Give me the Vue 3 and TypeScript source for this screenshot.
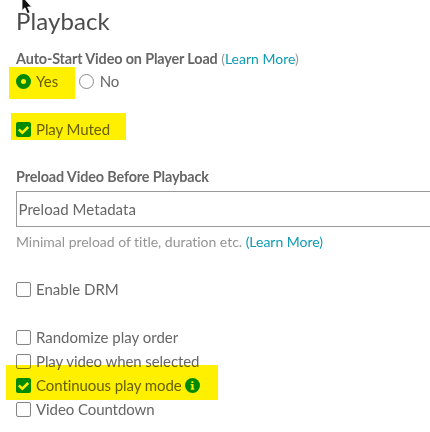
<script setup lang="ts">
import { ref } from 'vue'

interface Option {
  label: string
  checked: boolean
  mark?: string
  info?: boolean
  tight?: boolean
}

const autoStart = ref<'yes' | 'no'>('yes')
const muted = ref<Option[]>([{ label: 'Play Muted', checked: true, mark: 'mark-muted', tight: true }])
const drm = ref<Option[]>([{ label: 'Enable DRM', checked: false }])
const playlist = ref<Option[]>([
  { label: 'Randomize play order', checked: false },
  { label: 'Play video when selected', checked: false, tight: true },
  { label: 'Continuous play mode', checked: true, mark: 'mark-continuous', info: true, tight: true },
  { label: 'Video Countdown', checked: false, tight: true },
])
const groups = [
  { name: 'muted', items: muted },
  { name: 'drm', items: drm },
  { name: 'playlist', items: playlist },
]
</script>

<template>
  <main class="panel">
    <svg class="cursor" viewBox="0 0 12 16" width="12" height="16">
      <path d="M1-4V10.6L4 7.8L6.4 13.6L9 12.5L6.6 7H10.6Z" fill="#111" stroke="#fff" stroke-width=".8" />
    </svg>
    <h1 class="title">Playback</h1>

    <div class="field-label"><b>Auto-Start Video on Player Load</b> <span class="paren">(<a class="link">Learn More</a>)</span></div>
    <div class="row radios">
      <span class="row choice" @click="autoStart = 'yes'">
        <i class="radio" :class="{ on: autoStart === 'yes' }"></i><span class="text">Yes</span>
      </span>
      <span class="row choice" @click="autoStart = 'no'">
        <i class="radio" :class="{ on: autoStart === 'no' }"></i><span class="text">No</span>
      </span>
      <span class="mark mark-yes"></span>
    </div>

    <template v-for="group in groups" :key="group.name">
      <div :class="['group', group.name]">
        <div v-for="item in group.items.value" :key="item.label" class="row" @click="item.checked = !item.checked">
          <i class="box" :class="{ on: item.checked }">
            <svg v-if="item.checked" viewBox="0 0 15 15" width="15" height="15">
              <path d="M2.8 7.4L6.3 10.7L12.2 5" fill="none" stroke="#fff" stroke-width="2.5" />
            </svg>
          </i>
          <span class="text" :class="{ tight: item.tight }">{{ item.label }}</span>
          <svg v-if="item.info" class="info" viewBox="0 0 15 15" width="15" height="15">
            <circle cx="7.5" cy="7.5" r="7.5" fill="#009300" />
            <path d="M6.4 3.2h2v1.8h-2zM5.7 6.1h2.8v4.4h.9v1.2H5.7v-1.2h.8V7.3h-.8z" fill="#fff" />
          </svg>
          <span v-if="item.mark" :class="['mark', item.mark]"></span>
        </div>
      </div>
      <template v-if="group.name === 'muted'">
        <div class="field-label preload"><b>Preload Video Before Playback</b></div>
        <div class="select">Preload Metadata</div>
        <div class="help">Minimal preload of title, duration etc. <a class="link">(Learn More)</a></div>
      </template>
    </template>
  </main>
</template>

<style>
body {
  background: #fff;
  overflow: hidden;
}
</style>

<style scoped>
.panel {
  position: relative;
  height: 432px;
  box-sizing: border-box;
  padding: 6px 0 0 16px;
  overflow: hidden;
  background: #fff;
  color: #666;
  font-family: Lato, sans-serif;
  font-size: 15px;
  font-variant-ligatures: none;
  white-space: nowrap;
}
.cursor {
  position: absolute;
  left: 21px;
  top: 0;
  z-index: 2;
}
.title {
  margin: 0 0 12px;
  font-size: 24px;
  line-height: 30px;
  font-weight: 400;
  letter-spacing: 0.1px;
  color: #4c4c4c;
}
.field-label {
  height: 21px;
  line-height: 21px;
  font-size: 14px;
}
.field-label b {
  font-size: 14.4px;
  letter-spacing: -0.14px;
}
.paren {
  color: #999;
}
.link {
  color: #0f9bb3;
}
.row {
  position: relative;
  display: flex;
  align-items: center;
  height: 24px;
}
.radios {
  gap: 20.5px;
}
.radio {
  box-sizing: border-box;
  width: 15px;
  height: 15px;
  margin-right: 5px;
  border: 1px solid #8a8a8a;
  border-radius: 50%;
}
.radio.on {
  border: 5px solid #009300;
}
.choice + .choice .radio {
  margin-right: 6px;
}
.tight {
  letter-spacing: -0.08px;
}
.box {
  box-sizing: border-box;
  width: 15px;
  height: 15px;
  margin-right: 5px;
  border: 1px solid #858585;
  border-radius: 2px;
}
.box.on {
  border: 0;
  background: #009300;
}
.box svg,
.info {
  display: block;
}
.info {
  margin: 1px 0 0 3px;
}
.mark {
  position: absolute;
  background: #fff000;
  mix-blend-mode: multiply;
}
.mark-yes {
  left: -7px;
  top: -2px;
  width: 66px;
  height: 32px;
}
.mark-muted {
  left: -5px;
  top: -4px;
  width: 115px;
  height: 27px;
}
.mark-continuous {
  left: -10px;
  top: -8px;
  width: 212px;
  height: 35px;
}
.muted {
  margin-top: 24px;
}
.preload {
  margin-top: 25px;
}
.select {
  box-sizing: border-box;
  height: 36px;
  margin: 4px -2px 0 0;
  padding-left: 1.5px;
  border: 1px solid #999;
  line-height: 35px;
  letter-spacing: 0.05px;
}
.help {
  height: 20px;
  margin-top: 5px;
  line-height: 20px;
  font-size: 14px;
  letter-spacing: -0.02px;
  color: #949494;
}
.drm {
  margin-top: 25px;
}
.playlist {
  margin-top: 24px;
}
</style>
